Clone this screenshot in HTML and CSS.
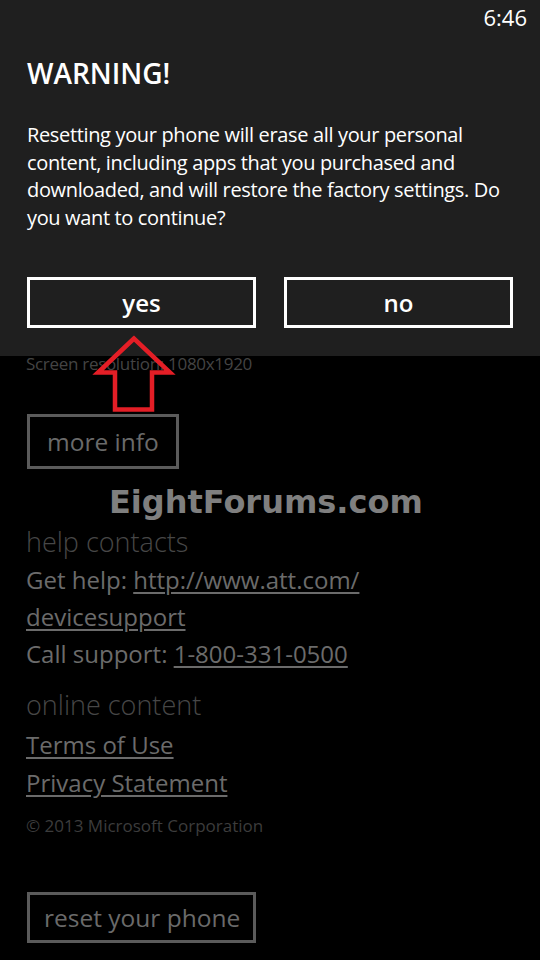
FILE: index.html
```html
<!DOCTYPE html>
<html lang="en">
<head>
<meta charset="utf-8">
<title>Reset your phone</title>
<link rel="stylesheet" href="styles.css">
</head>
<body>
<div class="page">
  <div class="res">Screen resolution: 1080x1920</div>
  <div class="btn more">more info</div>
  <div class="watermark">EightForums.com</div>
  <div class="heading h-help">help contacts</div>
  <div class="links help">Get help: <span class="u">http://www.att.com/</span><br><span class="u">devicesupport</span><br>Call support: <span class="u">1-800-331-0500</span></div>
  <div class="heading h-online">online content</div>
  <div class="links online"><span class="u">Terms of Use</span><br><span class="u">Privacy Statement</span></div>
  <div class="copy">© 2013 Microsoft Corporation</div>
  <div class="btn reset">reset your phone</div>
</div>

<div class="dialog">
  <div class="status"><span class="time">6:46</span></div>
  <div class="title">WARNING!</div>
  <div class="message">Resetting your phone will erase all your personal content, including apps that you purchased and downloaded, and will restore the factory settings. Do you want to continue?</div>
  <div class="actions">
    <div class="dbtn">yes</div>
    <div class="dbtn">no</div>
  </div>
</div>

<svg class="arrow" width="90" height="90" viewBox="0 0 90 90" aria-hidden="true">
  <polygon points="44,5.5 8,39.5 25,39.5 25,76.5 62,76.5 62,39.5 80,39.5" fill="none" stroke="#e41e26" stroke-width="4.5" stroke-linejoin="miter"/>
</svg>
</body>
</html>
```

FILE: styles.css
```css
html, body {
  margin: 0;
  padding: 0;
  background: #000;
}
body {
  width: 540px;
  height: 960px;
  overflow: hidden;
  position: relative;
  font-family: "Open Sans", "Noto Sans", sans-serif;
}
.page {
  padding: 352px 0 0 26px;
  display: flex;
  flex-direction: column;
  align-items: flex-start;
}
.res {
  font-size: 17px;
  line-height: 24px;
  letter-spacing: -0.3px;
  color: #444;
}
.btn {
  box-sizing: border-box;
  border: 3px solid #5b5b5b;
  color: #6a6a6a;
  font-size: 24.5px;
  line-height: 49px;
  height: 55px;
  margin-left: 1px;
  white-space: nowrap;
}
.more {
  margin-top: 38px;
  width: 152px;
  padding: 0 0 0 17px;
}
.watermark {
  margin-top: 15px;
  margin-left: 83px;
  font-family: "DejaVu Sans", Verdana, sans-serif;
  font-weight: bold;
  font-size: 32px;
  line-height: 36px;
  color: #7f7f7f;
}
.heading {
  font-weight: 300;
  font-size: 27px;
  line-height: 36px;
  color: #474747;
}
.h-help { margin-top: 4px; }
.h-online { margin-top: 15px; }
.links {
  font-size: 24px;
  color: #6b6b6b;
}
.help {
  margin-top: 1px;
  line-height: 37px;
}
.online {
  margin-top: 3px;
  line-height: 38px;
}
.u {
  text-decoration: underline;
  text-decoration-thickness: 1.5px;
  text-underline-offset: 3px;
}
.copy {
  margin-top: 12px;
  font-size: 17px;
  line-height: 24px;
  color: #3c3c3c;
}
.reset {
  margin-top: 54px;
  height: 51px;
  line-height: 45px;
  width: 229px;
  padding: 0 0 0 14px;
}

.dialog {
  position: absolute;
  top: 0;
  left: 0;
  width: 540px;
  height: 356px;
  background: #1f1f1f;
  color: #fff;
  box-sizing: border-box;
  padding: 0 27px;
}
.status {
  display: flex;
  justify-content: flex-end;
  height: 30px;
  margin-top: 2px;
  margin-right: -14px;
}
.time {
  font-size: 22px;
  line-height: 30px;
}
.title {
  margin-top: 23px;
  font-size: 28px;
  font-weight: 600;
  line-height: 36px;
}
.message {
  margin-top: 30px;
  font-size: 20px;
  line-height: 27.5px;
  letter-spacing: -0.35px;
  width: 487px;
}
.actions {
  margin-top: 46px;
  display: flex;
  gap: 28px;
}
.dbtn {
  box-sizing: border-box;
  width: 229px;
  height: 51px;
  border: 3px solid #fff;
  text-align: center;
  font-size: 24px;
  font-weight: 600;
  line-height: 45px;
}
.arrow {
  position: absolute;
  left: 90px;
  top: 333px;
}
```
